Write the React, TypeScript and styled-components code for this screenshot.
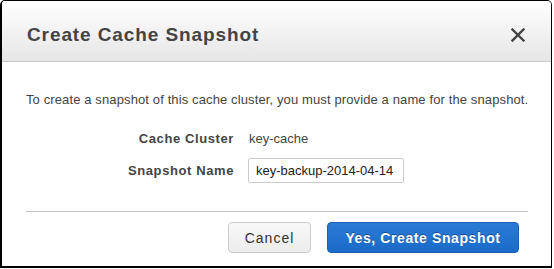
import styled, { createGlobalStyle } from "styled-components";

const GlobalStyle = createGlobalStyle`
    html, body {
        margin: 0;
        padding: 0;
        background: #ffffff;
    }
    body {
        font-family: "Liberation Sans", Arial, sans-serif;
        color: #444444;
    }
`;

export default function App() {
    return (
        <>
            <GlobalStyle />
            <Dialog>
                <Header>
                    <Title>Create Cache Snapshot</Title>
                    <CloseButton aria-label="Close">
                        <svg width="14" height="14" viewBox="0 0 14 14">
                            <path d="M1.5 1.5 L12.5 12.5 M12.5 1.5 L1.5 12.5" stroke="#444" strokeWidth="2.4" strokeLinecap="square" />
                        </svg>
                    </CloseButton>
                </Header>
                <Body>
                    <Intro>To create a snapshot of this cache cluster, you must provide a name for the snapshot.</Intro>
                    <Form>
                        <Label>Cache Cluster</Label>
                        <Value>key-cache</Value>
                        <Label>Snapshot Name</Label>
                        <TextInput defaultValue="key-backup-2014-04-14" />
                    </Form>
                    <Divider />
                    <Footer>
                        <Button>Cancel</Button>
                        <Button primary>Yes, Create Snapshot</Button>
                    </Footer>
                </Body>
            </Dialog>
        </>
    );
}

const Dialog = styled.div`
    box-sizing: border-box;
    width: 552px;
    height: 268px;
    border: 1px solid #000000;
    border-left-width: 2px;
    border-bottom-width: 2px;
    border-radius: 5px 5px 0 0;
    background: #ffffff;
    display: flex;
    flex-direction: column;
    overflow: hidden;
`;

const Header = styled.div`
    box-sizing: border-box;
    height: 61px;
    padding: 7px 26px 0 25px;
    display: flex;
    align-items: center;
    justify-content: space-between;
    background: linear-gradient(to bottom, #ffffff, #e6e6e6);
    border-bottom: 1px solid #c8c8c8;
`;

const Title = styled.h1`
    margin: 0;
    font-size: 19px;
    font-weight: bold;
    color: #444444;
    letter-spacing: 0.9px;
`;

const CloseButton = styled.button`
    border: none;
    background: none;
    padding: 0;
    width: 14px;
    height: 14px;
    display: flex;
    cursor: pointer;
`;

const Body = styled.div`
    padding: 30px 23px 0 24px;
    display: flex;
    flex-direction: column;
`;

const Intro = styled.p`
    margin: 0;
    font-size: 13px;
    color: #444444;
    letter-spacing: 0.12px;
    white-space: nowrap;
`;

const Form = styled.div`
    margin-top: 24px;
    display: grid;
    grid-template-columns: 208px auto;
    column-gap: 14px;
    row-gap: 12px;
    align-items: center;
`;

const Label = styled.div`
    text-align: right;
    font-size: 13px;
    font-weight: bold;
    color: #444444;
    letter-spacing: 0.6px;
`;

const Value = styled.div`
    font-size: 13px;
    color: #444444;
    padding-left: 1px;
`;

const TextInput = styled.input`
    box-sizing: border-box;
    width: 156px;
    height: 25px;
    padding: 0 7px;
    border: 1px solid #cccccc;
    border-radius: 2px;
    font-family: "Liberation Sans", Arial, sans-serif;
    font-size: 13px;
    color: #222222;
    justify-self: start;
`;

const Divider = styled.div`
    margin-top: 28px;
    height: 1px;
    background: #c4c4c4;
`;

const Footer = styled.div`
    margin-top: 10px;
    display: flex;
    justify-content: flex-end;
    gap: 16px;
    padding-right: 9px;
`;

const Button = styled.button<{ primary?: boolean }>`
    box-sizing: border-box;
    height: 31px;
    padding: 0;
    width: ${(p) => (p.primary ? "192px" : "83px")};
    border-radius: 4px;
    font-family: "Liberation Sans", Arial, sans-serif;
    font-size: 14px;
    font-weight: ${(p) => (p.primary ? "bold" : "normal")};
    color: ${(p) => (p.primary ? "#ffffff" : "#333333")};
    border: 1px solid ${(p) => (p.primary ? "#1a5fb4" : "#cccccc")};
    background: ${(p) => (p.primary ? "linear-gradient(to bottom, #2b7bd6, #1a6bc9)" : "linear-gradient(to bottom, #f8f8f8, #ececec)")};
    text-shadow: ${(p) => (p.primary ? "0 -1px 0 rgba(0,0,0,0.35)" : "none")};
    letter-spacing: ${(p) => (p.primary ? "0.6px" : "1px")};
    cursor: pointer;
`;
